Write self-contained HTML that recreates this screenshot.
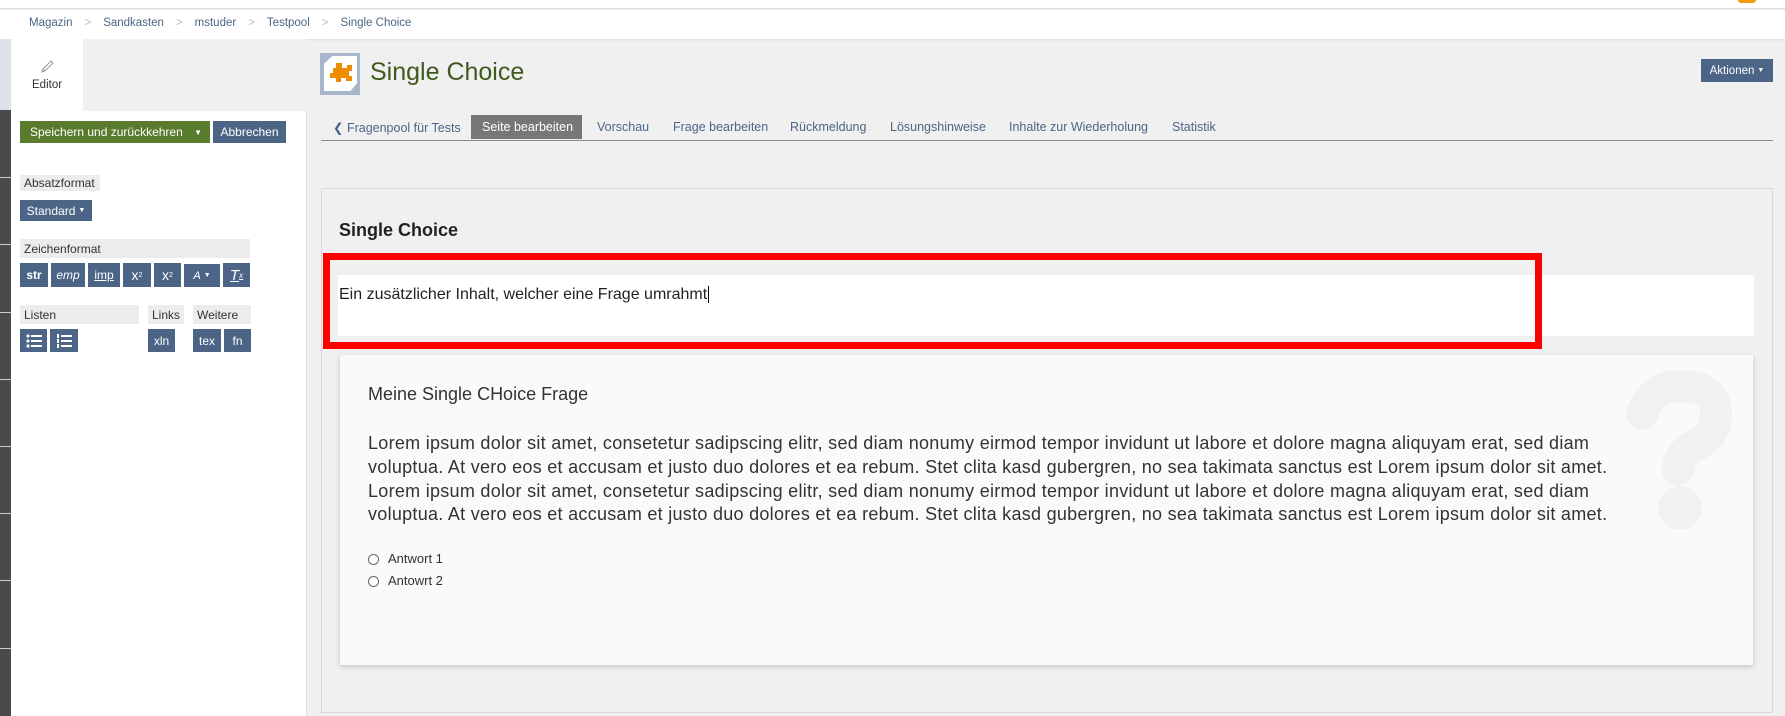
<!DOCTYPE html>
<html><head><meta charset="utf-8"><style>
*{box-sizing:border-box;margin:0;padding:0}
body{width:1785px;height:716px;overflow:hidden;background:#f0f0f0;font-family:"Liberation Sans",sans-serif;position:relative;color:#161616}
.a{position:absolute}
.btn{position:absolute;background:#4c6586;color:#fff;font-size:12px;display:flex;align-items:center;justify-content:center}
.lbl{position:absolute;background:#ececec;color:#333;font-size:12px;padding-left:4px;display:flex;align-items:center}
.tab{position:absolute;top:120px;font-size:12.5px;color:#4c6586}
.bc{color:#bbb;margin:0 12px}
</style></head><body>
<div class="a" style="left:0;top:0;width:1785px;height:9px;background:#fff;border-bottom:1px solid #ddd"></div>
<div class="a" style="left:1738px;top:0;width:18px;height:3px;background:#f39c12;border-radius:0 0 9px 9px"></div>
<div class="a" style="left:0;top:10px;width:1785px;height:29px;background:#fff;box-shadow:0 1px 2px rgba(0,0,0,.08)"></div>
<div class="a" style="top:17px;left:29px;font-size:11.5px;color:#4c6586;white-space:nowrap">Magazin<span class="bc">&gt;</span>Sandkasten<span class="bc">&gt;</span>mstuder<span class="bc">&gt;</span>Testpool<span class="bc">&gt;</span>Single Choice</div>
<!-- left strip -->
<div class="a" style="left:0;top:39px;width:11px;height:71px;background:#dde2ea"></div>
<div class="a" style="left:0;top:110px;width:11px;height:606px;background:#4a4a4a"></div>
<div class="a" style="left:0;top:177px;width:11px;height:1px;background:#ccc"></div>
<div class="a" style="left:0;top:244px;width:11px;height:1px;background:#ccc"></div>
<div class="a" style="left:0;top:312px;width:11px;height:1px;background:#ccc"></div>
<div class="a" style="left:0;top:379px;width:11px;height:1px;background:#ccc"></div>
<div class="a" style="left:0;top:446px;width:11px;height:1px;background:#ccc"></div>
<div class="a" style="left:0;top:513px;width:11px;height:1px;background:#ccc"></div>
<div class="a" style="left:0;top:580px;width:11px;height:1px;background:#ccc"></div>
<div class="a" style="left:0;top:648px;width:11px;height:1px;background:#ccc"></div>
<!-- left panel -->
<div class="a" style="left:11px;top:39px;width:296px;height:677px;background:#fff;border-right:1px solid #ddd"></div>
<div class="a" style="left:83px;top:39px;width:224px;height:72px;background:#f0f0f0"></div>
<svg class="a" style="left:39px;top:59px" width="16" height="16" viewBox="0 0 16 16"><path d="M3 13 L4 10 L12 2 L14 4 L6 12 Z M4 10 L6 12" fill="none" stroke="#999" stroke-width="1"/></svg>
<div class="a" style="left:32px;top:79px;font-size:11.5px;color:#333">Editor</div>
<div class="btn" style="left:20px;top:121px;width:190px;height:22px;background:#5a7a2e;justify-content:flex-start;padding-left:10px">Speichern und zurückkehren<span style="position:absolute;right:8px;font-size:8px">▼</span></div>
<div class="btn" style="left:213px;top:121px;width:73px;height:22px">Abbrechen</div>
<div class="lbl" style="left:20px;top:175px;width:80px;height:16px">Absatzformat</div>
<div class="btn" style="left:20px;top:200px;width:72px;height:21px">Standard <span style="font-size:7px;margin-left:3px">▼</span></div>
<div class="lbl" style="left:20px;top:239px;width:230px;height:19px">Zeichenformat</div>
<div class="btn" style="left:20px;top:263px;width:28px;height:24px;font-weight:bold">str</div>
<div class="btn" style="left:51px;top:263px;width:34px;height:24px;font-style:italic">emp</div>
<div class="btn" style="left:88px;top:263px;width:32px;height:24px;text-decoration:underline">imp</div>
<div class="btn" style="left:123px;top:263px;width:28px;height:24px;font-size:14px">x<sup style="font-size:7px">2</sup></div>
<div class="btn" style="left:154px;top:263px;width:27px;height:24px;font-size:14px">x<sub style="font-size:7px">2</sub></div>
<div class="btn" style="left:184px;top:264px;width:36px;height:23px;font-style:italic;font-size:11px">A <span style="font-size:7px;margin-left:3px;font-style:normal">▼</span></div>
<div class="btn" style="left:223px;top:263px;width:27px;height:24px;font-size:15px;font-style:italic;text-decoration:underline">T<sub style="font-size:8px">x</sub></div>
<div class="lbl" style="left:20px;top:305px;width:119px;height:19px">Listen</div>
<div class="lbl" style="left:148px;top:305px;width:36px;height:19px">Links</div>
<div class="lbl" style="left:193px;top:305px;width:58px;height:19px">Weitere</div>
<div class="btn" style="left:20px;top:329px;width:27px;height:23px"><svg width="16" height="14"><g fill="#fff"><circle cx="2" cy="2" r="1.6"/><circle cx="2" cy="7" r="1.6"/><circle cx="2" cy="12" r="1.6"/><rect x="5" y="1" width="11" height="2"/><rect x="5" y="6" width="11" height="2"/><rect x="5" y="11" width="11" height="2"/></g></svg></div>
<div class="btn" style="left:50px;top:329px;width:28px;height:23px"><svg width="16" height="14"><g fill="#fff"><rect x="1" y="0" width="2" height="4"/><rect x="1" y="5" width="2" height="4"/><rect x="1" y="10" width="2" height="4"/><rect x="5" y="1" width="11" height="2"/><rect x="5" y="6" width="11" height="2"/><rect x="5" y="11" width="11" height="2"/></g></svg></div>
<div class="btn" style="left:148px;top:329px;width:27px;height:23px">xln</div>
<div class="btn" style="left:193px;top:329px;width:28px;height:23px">tex</div>
<div class="btn" style="left:224px;top:329px;width:27px;height:23px">fn</div>
<!-- header -->
<div class="a" style="left:320px;top:53px;width:40px;height:42px;background:#a8b6cc"></div>
<div class="a" style="left:324px;top:56px;width:33px;height:35px;background:#fff;clip-path:polygon(25% 0,100% 0,100% 78%,80% 100%,0 100%,0 22%)"></div>
<svg class="a" style="left:326px;top:60px" width="28" height="28" viewBox="0 0 28 28"><path d="M10 3h6v5h5v-3h5v6h-3v5h3v5h-6v-3h-5v4h-5v-4H4v-5h3V8h3z" fill="#f08c00"/></svg>
<div class="a" style="left:370px;top:58px;font-size:25px;color:#3f5a1d">Single Choice</div>
<div class="btn" style="left:1701px;top:59px;width:72px;height:23px;font-size:11.5px">Aktionen <span style="font-size:7px;margin-left:3px">▼</span></div>
<!-- tabs -->
<div class="a" style="left:321px;top:140px;width:1452px;height:1px;background:#888"></div>
<div class="tab" style="left:333px">❮ Fragenpool für Tests</div>
<div class="a" style="left:471px;top:115px;width:111px;height:24px;background:#777"></div>
<div class="tab" style="left:482px;color:#fff">Seite bearbeiten</div>
<div class="tab" style="left:597px">Vorschau</div>
<div class="tab" style="left:673px">Frage bearbeiten</div>
<div class="tab" style="left:790px">Rückmeldung</div>
<div class="tab" style="left:890px">Lösungshinweise</div>
<div class="tab" style="left:1009px">Inhalte zur Wiederholung</div>
<div class="tab" style="left:1172px">Statistik</div>
<!-- panel -->
<div class="a" style="left:321px;top:188px;width:1452px;height:525px;border:1px solid #d8d8d8;background:#f0f0f0"></div>
<div class="a" style="left:339px;top:220px;font-size:18px;font-weight:bold;color:#222">Single Choice</div>
<div class="a" style="left:338px;top:275px;width:1416px;height:61px;background:#fff"></div>
<div class="a" style="left:323px;top:253px;width:1219px;height:96px;border:7px solid #f00"></div>
<div class="a" style="left:339px;top:286px;font-size:16px;color:#222">Ein zusätzlicher Inhalt, welcher eine Frage umrahmt<span style="border-left:1px solid #000;margin-left:1px"></span></div>
<div class="a" style="left:340px;top:355px;width:1413px;height:310px;background:#fafafa;box-shadow:0 2px 5px rgba(0,0,0,.18)"></div>
<svg class="a" style="left:1610px;top:366px" width="140" height="170"><path d="M32 48 Q42 20 70 20 Q106 20 106 48 Q106 70 84 80 Q68 88 68 104" fill="none" stroke="#f1f1f1" stroke-width="32" stroke-linecap="round" stroke-linejoin="round"/><circle cx="70" cy="142" r="22" fill="#f1f1f1"/></svg>
<div class="a" style="left:368px;top:384px;font-size:18px;color:#333">Meine Single CHoice Frage</div>
<div class="a" style="left:368px;top:432px;font-size:18px;line-height:23.8px;color:#333;letter-spacing:0.28px;white-space:nowrap">Lorem ipsum dolor sit amet, consetetur sadipscing elitr, sed diam nonumy eirmod tempor invidunt ut labore et dolore magna aliquyam erat, sed diam<br>voluptua. At vero eos et accusam et justo duo dolores et ea rebum. Stet clita kasd gubergren, no sea takimata sanctus est Lorem ipsum dolor sit amet.<br>Lorem ipsum dolor sit amet, consetetur sadipscing elitr, sed diam nonumy eirmod tempor invidunt ut labore et dolore magna aliquyam erat, sed diam<br>voluptua. At vero eos et accusam et justo duo dolores et ea rebum. Stet clita kasd gubergren, no sea takimata sanctus est Lorem ipsum dolor sit amet.</div>
<div class="a" style="left:368px;top:554px;width:11px;height:11px;border:1px solid #666;border-radius:50%;background:#fff"></div>
<div class="a" style="left:388px;top:551px;font-size:13px;color:#333">Antwort 1</div>
<div class="a" style="left:368px;top:576px;width:11px;height:11px;border:1px solid #666;border-radius:50%;background:#fff"></div>
<div class="a" style="left:388px;top:573px;font-size:13px;color:#333">Antowrt 2</div>
</body></html>
